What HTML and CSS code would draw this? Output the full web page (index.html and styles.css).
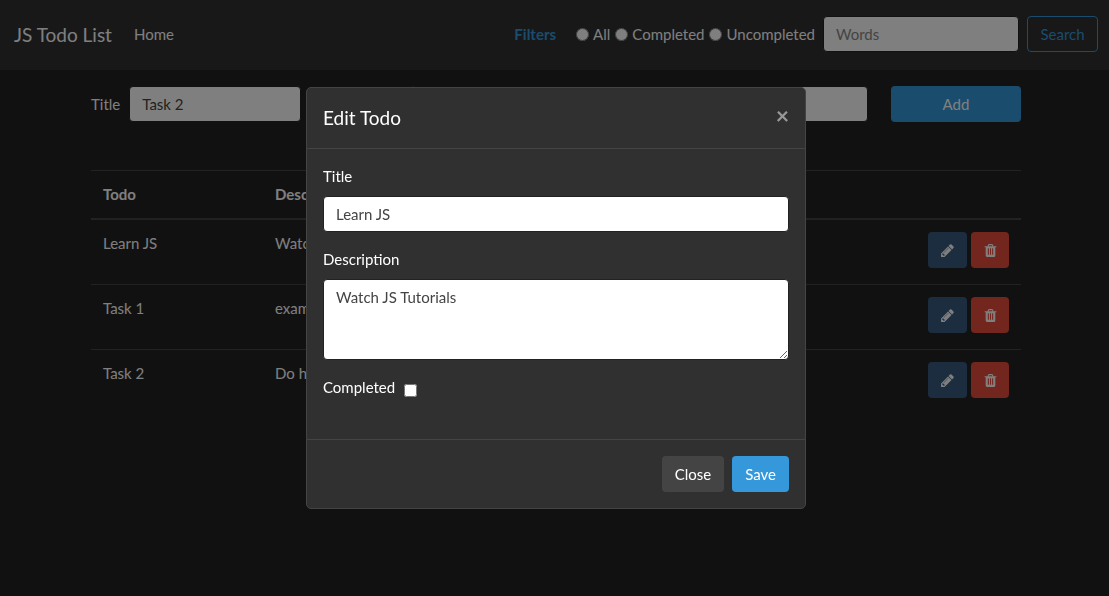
FILE: index.html
```html
<!DOCTYPE html>
<html lang="en">
<head>
<meta charset="utf-8">
<meta name="viewport" content="width=device-width, initial-scale=1">
<title>JS Todo List</title>
<link rel="stylesheet" href="styles.css">
</head>
<body>
<svg class="sprite" aria-hidden="true">
  <symbol id="pencil" viewBox="0 0 1792 1792"><path d="M491 1536l91-91-235-235-91 91v107h128v128h107zm523-928q0-22-22-22-10 0-17 7l-542 542q-7 7-7 17 0 22 22 22 10 0 17-7l542-542q7-7 7-17zm-54-192l416 416-832 832h-416v-416zm683 96q0 53-37 90l-166 166-416-416 166-165q36-38 90-38 53 0 91 38l235 234q37 39 37 91z"/></symbol>
  <symbol id="trash" viewBox="0 0 1792 1792"><path d="M704 1376v-704q0-14-9-23t-23-9h-64q-14 0-23 9t-9 23v704q0 14 9 23t23 9h64q14 0 23-9t9-23zm256 0v-704q0-14-9-23t-23-9h-64q-14 0-23 9t-9 23v704q0 14 9 23t23 9h64q14 0 23-9t9-23zm256 0v-704q0-14-9-23t-23-9h-64q-14 0-23 9t-9 23v704q0 14 9 23t23 9h64q14 0 23-9t9-23zm-544-992h448l-48-117q-7-9-17-11h-317q-10 2-17 11zm928 32v64q0 14-9 23t-23 9h-96v948q0 83-47 143.5t-113 60.5h-832q-66 0-113-58.5t-47-141.5v-952h-96q-14 0-23-9t-9-23v-64q0-14 9-23t23-9h309l70-167q15-37 54-63t79-26h320q40 0 79 26t54 63l70 167h309q14 0 23 9t9 23z"/></symbol>
</svg>

<nav class="navbar">
  <a class="brand" href="#">JS Todo List</a>
  <a class="nav-link" href="#">Home</a>
  <form class="filters">
    <strong class="filters-title">Filters</strong>
    <div class="radios">
      <label class="radio"><input type="radio" name="type" value="all">All</label>
      <label class="radio"><input type="radio" name="type" value="completed">Completed</label>
      <label class="radio"><input type="radio" name="type" value="uncompleted">Uncompleted</label>
    </div>
    <input class="control search-box" type="text" placeholder="Words" aria-label="Words">
    <button class="btn btn-outline" type="button">Search</button>
  </form>
</nav>

<main class="container">
  <form class="add-form">
    <label for="title">Title</label>
    <input class="control title-box" id="title" type="text" value="Task 2">
    <label class="desc-label" for="description">Description</label>
    <input class="control desc-box" id="description" type="text">
    <button class="btn btn-info add-btn" type="button">Add</button>
  </form>

  <table class="table">
    <thead>
      <tr><th class="col-todo">Todo</th><th>Description</th><th class="col-actions"></th></tr>
    </thead>
    <tbody>
      <tr>
        <td>Learn JS</td><td>Watch JS Tutorials</td>
        <td><div class="actions">
          <button class="btn btn-primary" type="button" aria-label="Edit"><svg class="icon"><use href="#pencil"/></svg></button>
          <button class="btn btn-danger" type="button" aria-label="Delete"><svg class="icon"><use href="#trash"/></svg></button>
        </div></td>
      </tr>
      <tr>
        <td>Task 1</td><td>example</td>
        <td><div class="actions">
          <button class="btn btn-primary" type="button" aria-label="Edit"><svg class="icon"><use href="#pencil"/></svg></button>
          <button class="btn btn-danger" type="button" aria-label="Delete"><svg class="icon"><use href="#trash"/></svg></button>
        </div></td>
      </tr>
      <tr>
        <td>Task 2</td><td>Do homework</td>
        <td><div class="actions">
          <button class="btn btn-primary" type="button" aria-label="Edit"><svg class="icon"><use href="#pencil"/></svg></button>
          <button class="btn btn-danger" type="button" aria-label="Delete"><svg class="icon"><use href="#trash"/></svg></button>
        </div></td>
      </tr>
    </tbody>
  </table>
</main>

<div class="backdrop">
  <div class="modal" role="dialog" aria-modal="true" aria-labelledby="modal-heading">
    <header class="modal-header">
      <h5 class="modal-title" id="modal-heading">Edit Todo</h5>
      <button class="close" type="button" aria-label="Close dialog">×</button>
    </header>
    <div class="modal-body">
      <div class="group">
        <label for="modal-title">Title</label>
        <input class="control" id="modal-title" type="text" value="Learn JS">
      </div>
      <div class="group">
        <label for="modal-description">Description</label>
        <textarea class="control" id="modal-description" rows="3">Watch JS Tutorials</textarea>
      </div>
      <div class="group check">
        <label for="modal-completed">Completed</label>
        <input id="modal-completed" type="checkbox">
      </div>
    </div>
    <footer class="modal-footer">
      <button class="btn btn-secondary" type="button">Close</button>
      <button class="btn btn-info" type="button">Save</button>
    </footer>
  </div>
</div>
</body>
</html>
```
FILE: styles.css
```css
* { box-sizing: border-box; }

body {
  margin: 0;
  background: #222;
  color: #fff;
  font: 15px/23px Lato, "Liberation Sans", sans-serif;
}

label { display: block; }

input[type="radio"],
input[type="checkbox"] { width: 13px; height: 13px; margin: 0; }

.sprite { display: none; }

.control {
  display: block;
  width: 100%;
  min-width: 0;
  height: 36px;
  padding: 6px 12px;
  border: 1px solid #222;
  border-radius: 4px;
  background: #fff;
  color: #444;
  font: inherit;
}
.control::placeholder { color: #888; }
textarea.control { height: 81px; resize: vertical; }

.btn {
  height: 36px;
  padding: 0 12px;
  border: 1px solid transparent;
  border-radius: 4px;
  color: #fff;
  font: inherit;
}
.btn-info { background: #3498db; }
.btn-primary { width: 39px; padding: 0; background: #375a7f; }
.btn-danger { width: 38px; padding: 0; background: #e74c3c; }
.btn-secondary { background: #444; }
.btn-outline { width: 71px; border-color: #3498db; background: transparent; color: #3498db; }

.icon { display: block; width: 15px; height: 15px; margin: 0 auto; fill: currentColor; }

.navbar {
  display: flex;
  align-items: center;
  padding: 16px 11px 18px 14px;
  background: #303030;
}
.brand { margin-right: 22px; color: #fff; font-size: 19px; text-decoration: none; }
.nav-link { color: #fff; text-decoration: none; }
.filters { display: flex; align-items: center; margin-left: auto; }
.filters-title { margin-right: 20px; color: #3498db; }
.radios { display: flex; gap: 5px; }
.radio { display: flex; align-items: center; gap: 4px; }
.search-box { width: 196px; margin: 0 8px; }

.container {
  width: 100%;
  max-width: 963px;
  margin: 0 auto;
  padding: 16px 15px 16px 18px;
}
.add-form { display: flex; align-items: center; margin-bottom: 48px; }
.title-box { width: 172px; margin-left: 9px; }
.desc-label { margin: 0 8px 0 24px; }
.desc-box { flex: 1; }
.add-btn { width: 130px; margin-left: 23px; }

.table { width: 100%; border-collapse: collapse; }
.table th,
.table td {
  padding: 12px;
  border-top: 1px solid #444;
  text-align: left;
  vertical-align: top;
}
.table thead th { border-bottom: 2px solid #444; }
.col-todo { width: 172px; }
.col-actions { width: 105px; }
.actions { display: flex; gap: 4px; height: 40px; }

.backdrop {
  position: fixed;
  inset: 0;
  padding: 87px 0 28px 3px;
  overflow: auto;
  background: rgba(0, 0, 0, 0.5);
}
.modal {
  max-width: 500px;
  margin: 0 auto;
  border: 1px solid #444;
  border-radius: 5px;
  background: #303030;
}
.modal-header {
  display: flex;
  justify-content: space-between;
  align-items: flex-start;
  padding: 16px;
  border-bottom: 1px solid #444;
}
.modal-title { margin: 0; font-size: 19px; font-weight: 400; line-height: 28px; }
.close {
  padding: 0;
  border: 0;
  background: none;
  color: #fff;
  font: bold 23px/22px Lato, "Liberation Sans", sans-serif;
  opacity: 0.5;
}
.modal-body { padding: 16px; }
.group { margin-bottom: 16px; }
.group label { margin-bottom: 8px; }
.check { display: flex; gap: 9px; }
.check input { margin-top: 8px; }
.modal-footer {
  display: flex;
  justify-content: flex-end;
  gap: 8px;
  padding: 16px;
  border-top: 1px solid #444;
}
```
